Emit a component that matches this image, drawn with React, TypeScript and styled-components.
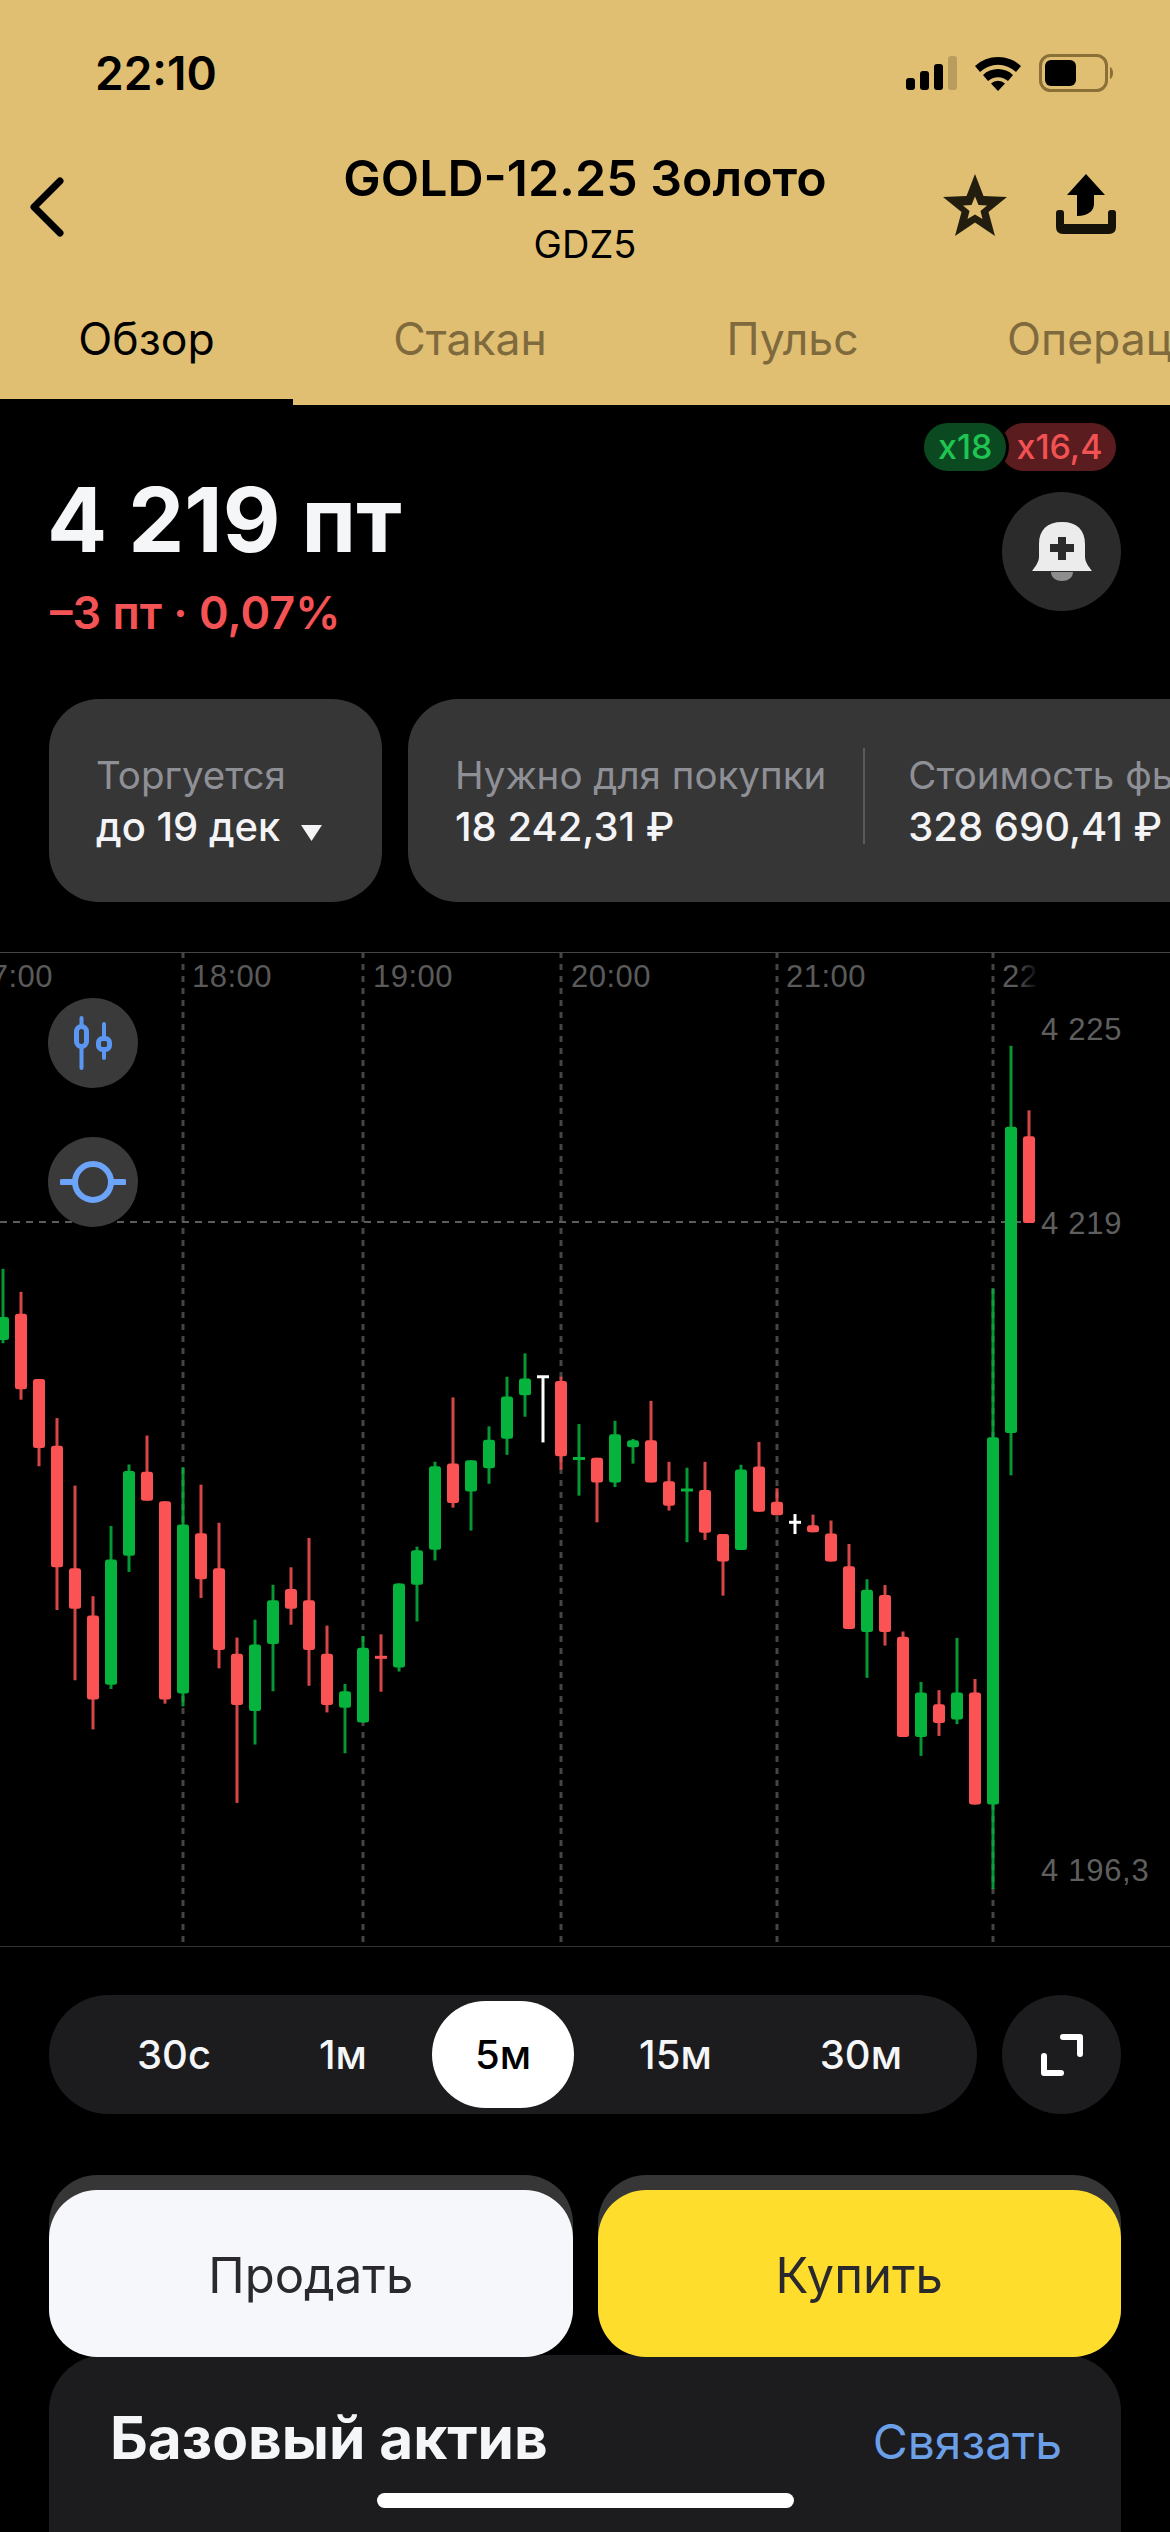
import React from 'react';
import styled, { createGlobalStyle } from 'styled-components';

const GlobalStyle = createGlobalStyle`
    html, body {
        margin: 0;
        padding: 0;
        background: #000;
    }
    * {
        box-sizing: border-box;
    }
`;

// y values below were read off the chart at two different scales
const left = (y: number) => 248 + y / 2.178;
const right = (y: number) => 48 + y / 1.704;

const GREEN = '#06b33c';
const RED = '#fb5254';
const WHITE = '#ffffff';

// color, wick top, body top, body bottom, wick bottom
type Candle = [string, number, number, number, number];

const leftCandles: Candle[] = [
    [GREEN, 150, 255, 305, 312],
    [RED, 200, 248, 412, 435],
    [RED, 390, 390, 540, 580],
    [RED, 475, 535, 800, 893],
    [RED, 622, 802, 890, 1046],
    [RED, 863, 905, 1088, 1153],
    [GREEN, 710, 783, 1056, 1065],
    [GREEN, 576, 590, 775, 810],
    [RED, 513, 592, 655, 655],
    [RED, 656, 656, 1088, 1097],
    [GREEN, 582, 707, 1075, 1103],
    [RED, 620, 726, 826, 867],
    [RED, 703, 802, 980, 1020],
    [RED, 953, 988, 1100, 1313],
    [GREEN, 914, 968, 1113, 1186],
    [GREEN, 838, 872, 967, 1070],
    [RED, 800, 847, 890, 925],
    [RED, 736, 872, 980, 1058],
    [RED, 927, 988, 1100, 1116],
    [GREEN, 1054, 1070, 1106, 1205],
    [GREEN, 950, 975, 1138, 1138],
    [RED, 946, 996, 996, 1071],
    [GREEN, 835, 835, 1018, 1027],
    [GREEN, 755, 763, 838, 918],
    [GREEN, 570, 580, 762, 785],
    [RED, 430, 574, 660, 670],
    [GREEN, 567, 567, 635, 720],
    [GREEN, 493, 522, 584, 618],
    [GREEN, 385, 428, 520, 555],
    [GREEN, 334, 389, 425, 472],
    [WHITE, 385, 385, 385, 528],
    [RED, 385, 394, 558, 587],
    [GREEN, 488, 563, 563, 644],
];

const rightCandles: Candle[] = [
    [RED, 780, 780, 822, 890],
    [GREEN, 717, 740, 822, 830],
    [GREEN, 748, 750, 762, 790],
    [RED, 683, 750, 822, 822],
    [RED, 787, 820, 862, 870],
    [GREEN, 797, 835, 835, 924],
    [RED, 787, 835, 908, 920],
    [RED, 910, 910, 957, 1015],
    [GREEN, 792, 800, 937, 937],
    [RED, 753, 795, 872, 872],
    [RED, 832, 855, 878, 878],
    [WHITE, 876, 890, 890, 910],
    [RED, 877, 895, 907, 907],
    [RED, 887, 909, 957, 957],
    [RED, 927, 965, 1072, 1072],
    [GREEN, 987, 1005, 1077, 1155],
    [RED, 997, 1014, 1077, 1100],
    [RED, 1076, 1085, 1256, 1256],
    [GREEN, 1162, 1180, 1256, 1288],
    [RED, 1176, 1200, 1232, 1254],
    [GREEN, 1087, 1180, 1226, 1234],
    [RED, 1157, 1180, 1371, 1371],
    [GREEN, 492, 745, 1371, 1515],
    [GREEN, 78, 216, 738, 810],
    [RED, 188, 232, 380, 380],
];

const candles: Candle[] = [
    ...leftCandles.map(([c, a, b, d, e]): Candle => [c, left(a), left(b), left(d), left(e)]),
    ...rightCandles.map(([c, a, b, d, e]): Candle => [c, right(a), right(b), right(d), right(e)]),
];

const gridLines = [183, 363, 561, 777, 993];
const timeLabels = [
    { x: -27, text: '17:00' },
    { x: 192, text: '18:00' },
    { x: 373, text: '19:00' },
    { x: 571, text: '20:00' },
    { x: 786, text: '21:00' },
    { x: 1002, text: '22:00' },
];
const priceLabels = [
    { y: 88, text: '4 225' },
    { y: 282, text: '4 219' },
    { y: 929, text: '4 196,3' },
];
const tabs = ['Обзор', 'Стакан', 'Пульс', 'Операции'];
const tabWidths = [293, 354, 291, 356];
const periods = ['30с', '1м', '5м', '15м', '30м'];

const Screen = styled.div`
    position: relative;
    width: 1170px;
    height: 2532px;
    overflow: hidden;
    background: #000;
    font-family: Inter, 'Noto Sans', sans-serif;
    color: #f5f6f8;
`;

const Header = styled.header`
    height: 405px;
    background: #e0bf73;
    color: #000;
`;

const StatusBar = styled.div`
    display: flex;
    justify-content: space-between;
    align-items: center;
    height: 148px;
    padding: 0 55px 2px 95px;
`;

const Clock = styled.span`
    font-size: 46px;
    font-weight: 600;
`;

const StatusIcons = styled.div`
    display: flex;
    align-items: center;
    gap: 17px;
`;

const NavRow = styled.div`
    position: relative;
    display: flex;
    justify-content: space-between;
    align-items: flex-start;
    height: 138px;
    padding: 0 54px 0 30px;
`;

const BackIcon = styled.svg`
    width: 34px;
    height: 60px;
    margin-top: 29px;
`;

const TitleBlock = styled.div`
    position: absolute;
    left: 0;
    right: 0;
    top: 2px;
    text-align: center;
`;

const Title = styled.div`
    font-size: 50px;
    font-weight: 600;
    line-height: 56px;
`;

const Ticker = styled.div`
    margin-top: 17px;
    font-size: 38px;
    line-height: 42px;
`;

const NavActions = styled.div`
    display: flex;
    gap: 49px;
    margin-top: 26px;
`;

const Tabs = styled.nav`
    display: flex;
    height: 119px;
`;

const Tab = styled.div<{ $active?: boolean; $width: number }>`
    flex: none;
    width: ${(p) => p.$width}px;
    padding-top: 27px;
    text-align: center;
    white-space: nowrap;
    font-size: 44.5px;
    line-height: 52px;
    color: ${(p) => (p.$active ? '#000' : '#7f6a3d')};
    border-bottom: ${(p) => (p.$active ? '6px solid #000' : 'none')};
`;

const Summary = styled.section`
    position: relative;
    height: 294px;
    padding: 65px 50px 0;
`;

const Price = styled.div`
    margin-left: -3px;
    font-size: 89px;
    font-weight: 700;
    line-height: 100px;
    white-space: nowrap;
`;

const Change = styled.div`
    margin-top: 16px;
    font-size: 45px;
    font-weight: 600;
    line-height: 54px;
    color: #f45355;
`;

const Badges = styled.div`
    position: absolute;
    top: 18px;
    left: 924px;
    display: flex;
`;

const GreenBadge = styled.span`
    position: relative;
    z-index: 1;
    height: 48px;
    padding: 0 14px;
    border-radius: 24px;
    background: #0b4a20;
    box-shadow: 0 0 0 3px #000;
    color: #1fc452;
    font-size: 34px;
    font-weight: 500;
    line-height: 48px;
`;

const RedBadge = styled.span`
    height: 48px;
    margin-left: -6px;
    padding: 0 14px 0 16px;
    border-radius: 24px;
    background: #5a1c1e;
    color: #f25254;
    font-size: 34px;
    font-weight: 500;
    line-height: 48px;
`;

const RoundButton = styled.div<{ $size: number; $bg: string }>`
    display: flex;
    align-items: center;
    justify-content: center;
    width: ${(p) => p.$size}px;
    height: ${(p) => p.$size}px;
    flex: none;
    border-radius: 50%;
    background: ${(p) => p.$bg};
`;

const BellSlot = styled.div`
    position: absolute;
    top: 87px;
    right: 49px;
`;

const Cards = styled.div`
    display: flex;
    gap: 26px;
    height: 203px;
    padding-left: 49px;
`;

const Card = styled.div<{ $width: number }>`
    display: flex;
    align-items: center;
    flex: none;
    width: ${(p) => p.$width}px;
    padding: 0 47px;
    border-radius: 50px;
    background: #363636;
`;

const Metric = styled.div`
    flex: none;
    white-space: nowrap;
`;

const MetricLabel = styled.div`
    font-size: 38.5px;
    line-height: 46px;
    color: #8f9096;
`;

const MetricValue = styled.div`
    margin-top: 6px;
    font-size: 40px;
    font-weight: 500;
    line-height: 46px;
    color: #f4f4f6;
`;

const Divider = styled.div`
    flex: none;
    width: 2px;
    height: 96px;
    margin: -10px 43px 0 37px;
    background: #5a5a5c;
`;

const Caret = styled.svg`
    margin-left: 21px;
`;

const Chart = styled.section`
    position: relative;
    height: 996px;
    margin-top: 50px;
`;

const ChartCanvas = styled.svg`
    display: block;
`;

const ChartTools = styled.div`
    position: absolute;
    top: 46px;
    left: 48px;
    display: flex;
    flex-direction: column;
    gap: 49px;
`;

const PeriodRow = styled.div`
    display: flex;
    gap: 25px;
    margin-top: 47px;
    padding: 0 49px;
`;

const PeriodBar = styled.div`
    display: flex;
    align-items: center;
    gap: 22px;
    width: 928px;
    height: 119px;
    padding-left: 45px;
    border-radius: 60px;
    background: #1c1c1e;
`;

const Period = styled.div<{ $active?: boolean }>`
    display: flex;
    align-items: center;
    height: 107px;
    padding: 0 43px;
    border-radius: 54px;
    font-size: 40px;
    font-weight: 500;
    background: ${(p) => (p.$active ? '#fff' : 'transparent')};
    color: ${(p) => (p.$active ? '#000' : '#f5f6f8')};
`;

const TradeRow = styled.div`
    position: relative;
    z-index: 1;
    display: flex;
    gap: 25px;
    margin-top: 61px;
    padding: 0 49px;
`;

const TradeBack = styled.div`
    flex: 1;
    padding-top: 15px;
    border-radius: 48px;
    background: #363636;
`;

const TradeButton = styled.div<{ $bg: string }>`
    display: flex;
    align-items: center;
    justify-content: center;
    height: 167px;
    padding-top: 3px;
    border-radius: 48px;
    background: ${(p) => p.$bg};
    color: #2a2a2e;
    font-size: 49px;
`;

const AssetCard = styled.section`
    display: flex;
    justify-content: space-between;
    align-items: baseline;
    height: 200px;
    margin: -2px 49px 0;
    padding: 47px 59px 0 61px;
    border-radius: 56px 56px 0 0;
    background: #1c1c1e;
`;

const AssetTitle = styled.h2`
    margin: 0;
    font-size: 58.5px;
    font-weight: 700;
`;

const AssetLink = styled.span`
    font-size: 48px;
    color: #6b9fe8;
`;

const HomeBar = styled.div`
    position: absolute;
    z-index: 2;
    left: 377px;
    bottom: 24px;
    width: 417px;
    height: 15px;
    border-radius: 8px;
    background: #fff;
`;

const StatusGlyphs = () => (
    <>
        <svg width="51" height="35" viewBox="0 0 51 35">
            <rect x="0" y="22" width="9" height="12" rx="3" fill="#000" />
            <rect x="14" y="15" width="9" height="19" rx="3" fill="#000" />
            <rect x="28" y="8" width="9" height="26" rx="3" fill="#000" />
            <rect x="42" y="0" width="9" height="34" rx="3" fill="#b99d5f" />
        </svg>
        <svg width="48" height="36" viewBox="0 0 48 36">
            <path d="M1 11 A34 34 0 0 1 47 11 L42 17 A26 26 0 0 0 6 17 Z" fill="#000" />
            <path d="M9 20 A22 22 0 0 1 39 20 L34 26 A15 15 0 0 0 14 26 Z" fill="#000" />
            <path d="M17 28.500 A10 10 0 0 1 31 28.500 L24 36 Z" fill="#000" />
        </svg>
        <svg width="76" height="38" viewBox="0 0 76 38">
            <rect x="1.500" y="1.500" width="66" height="35" rx="10" fill="none" stroke="#8a6f37" strokeWidth="3" />
            <rect x="6" y="6" width="31" height="26" rx="6" fill="#000" />
            <path d="M71 13 C75 14 75 24 71 25 Z" fill="#8a6f37" />
        </svg>
    </>
);

const StarIcon = () => (
    <svg width="64" height="62" viewBox="0 0 64 62">
        <path
            fillRule="evenodd"
            d="M32 0 L40.500 22 L64 23 L45.500 38 L52 62 L32 48.500 L12 62 L18.500 38 L0 23 L23.500 22 Z M32 22.500 L28.500 31 L20 31.500 L26.500 37 L24.500 45 L32 40.500 L39.500 45 L37.500 37 L44 31.500 L35.500 31 Z"
            fill="#231d10"
        />
    </svg>
);

const ShareIcon = () => (
    <svg width="60" height="60" viewBox="0 0 60 60">
        <path d="M30 0 L49 21 L38 21 L38 30 C38 36 33 42 21 42 L21 21 L11 21 Z" fill="#000" />
        <path
            d="M0 39 Q0 36 3 36 L5 36 Q8 36 8 39 L8 50 L52 50 L52 39 Q52 36 55 36 L57 36 Q60 36 60 39 L60 53 Q60 60 53 60 L7 60 Q0 60 0 53 Z"
            fill="#15120a"
        />
    </svg>
);

const BellIcon = () => (
    <svg width="60" height="60" viewBox="0 0 60 60">
        <path d="M19 50 L41 50 C41 62 19 62 19 50 Z" fill="#8e8e8e" />
        <path
            d="M30 0 C45 0 53 8 53 22 L53 35 C53 40 57 45 60 49 L0 49 C3 45 7 40 7 35 L7 22 C7 8 15 0 30 0 Z"
            fill="#ececec"
        />
        <rect x="26" y="15" width="8" height="23" fill="#2b2b2b" />
        <rect x="18" y="22" width="24" height="8" fill="#2b2b2b" />
    </svg>
);

const CandleToolIcon = () => (
    <svg width="38" height="54" viewBox="0 0 38 54" fill="none" stroke="#5b97f2" strokeWidth="4" strokeLinecap="round">
        <path d="M7.500 2 L7.500 8 M7.500 33 L7.500 52" />
        <rect x="2.500" y="10.500" width="10" height="20" rx="5" strokeWidth="5" />
        <path d="M30 8 L30 20 M30 36 L30 42" />
        <rect x="24.500" y="22.500" width="11" height="11" rx="4" strokeWidth="5" />
    </svg>
);

const LineToolIcon = () => (
    <svg width="66" height="42" viewBox="0 0 66 42" fill="none" stroke="#6ba4f8" strokeWidth="6" strokeLinecap="round">
        <circle cx="33" cy="21" r="18" />
        <path d="M2 21 L14 21 M52 21 L64 21" />
    </svg>
);

const ExpandIcon = () => (
    <svg width="42" height="42" viewBox="0 0 42 42" fill="none" stroke="#fff" strokeWidth="6" strokeLinecap="round" strokeLinejoin="round">
        <path d="M22 3 L39 3 L39 20" />
        <path d="M3 22 L3 39 L20 39" />
    </svg>
);

const PriceChart = () => (
    <ChartCanvas width="1170" height="996" viewBox="0 0 1170 996">
        <defs>
            <clipPath id="time-clip">
                <rect x="0" y="0" width="1040" height="60" />
            </clipPath>
            <linearGradient id="time-fade">
                <stop offset="0" stopColor="#000" stopOpacity="0" />
                <stop offset="1" stopColor="#000" stopOpacity="1" />
            </linearGradient>
        </defs>
        <rect x="0" y="0" width="1170" height="1" fill="#444" />
        <rect x="0" y="994" width="1170" height="1" fill="#333" />
        {gridLines.map((x) => (
            <line key={x} x1={x} y1="0" x2={x} y2="994" stroke="#454545" strokeWidth="3" strokeDasharray="6 6" />
        ))}
        <line x1="0" y1="270" x2="1037" y2="270" stroke="#5c5c5c" strokeWidth="2" strokeDasharray="7 6" />
        {candles.map(([color, wickTop, bodyTop, bodyBottom, wickBottom], i) => {
            const x = 3 + i * 18;
            const doji = bodyBottom - bodyTop < 2;
            return (
                <g key={i} fill={color}>
                    <rect x={x - 1.500} y={wickTop} width="3" height={wickBottom - wickTop} opacity={color === WHITE ? 1 : 0.85} />
                    {doji ? (
                        <rect x={x - 6} y={bodyTop - 1.500} width="12" height="3" />
                    ) : (
                        <rect x={x - 6} y={bodyTop} width="12" height={bodyBottom - bodyTop} rx="2.500" />
                    )}
                </g>
            );
        })}
        <g clipPath="url(#time-clip)" fontFamily="'Liberation Sans', sans-serif" fontSize="31" fill="#5a5a5a">
            {timeLabels.map((label) => (
                <text key={label.x} x={label.x} y="35" letterSpacing="0.5">
                    {label.text}
                </text>
            ))}
        </g>
        <rect x="1016" y="6" width="24" height="40" fill="url(#time-fade)" />
        <g fontFamily="'Liberation Sans', sans-serif" fontSize="31" fill="#5f5f5f">
            {priceLabels.map((label) => (
                <text key={label.y} x="1041" y={label.y} letterSpacing="0.7">
                    {label.text}
                </text>
            ))}
        </g>
    </ChartCanvas>
);

const App = () => {
    return (
        <Screen>
            <GlobalStyle />
            <Header>
                <StatusBar>
                    <Clock>22:10</Clock>
                    <StatusIcons>
                        <StatusGlyphs />
                    </StatusIcons>
                </StatusBar>
                <NavRow>
                    <TitleBlock>
                        <Title>GOLD-12.25 Золото</Title>
                        <Ticker>GDZ5</Ticker>
                    </TitleBlock>
                    <BackIcon viewBox="0 0 34 60" fill="none" stroke="#000" strokeWidth="7" strokeLinecap="round" strokeLinejoin="round">
                        <path d="M30 4 L4 30 L30 56" />
                    </BackIcon>
                    <NavActions>
                        <StarIcon />
                        <ShareIcon />
                    </NavActions>
                </NavRow>
                <Tabs>
                    {tabs.map((tab, i) => (
                        <Tab key={tab} $active={i === 0} $width={tabWidths[i]}>
                            {tab}
                        </Tab>
                    ))}
                </Tabs>
            </Header>

            <Summary>
                <Price>4 219 пт</Price>
                <Change>–3 пт · 0,07%</Change>
                <Badges>
                    <GreenBadge>x18</GreenBadge>
                    <RedBadge>x16,4</RedBadge>
                </Badges>
                <BellSlot>
                    <RoundButton $size={119} $bg="#2b2b2b">
                        <BellIcon />
                    </RoundButton>
                </BellSlot>
            </Summary>

            <Cards>
                <Card $width={333}>
                    <Metric>
                        <MetricLabel>Торгуется</MetricLabel>
                        <MetricValue>
                            до 19 дек
                            <Caret width="21" height="16" viewBox="0 0 21 16">
                                <path d="M0 0 L21 0 L10.500 16 Z" fill="#f4f4f6" />
                            </Caret>
                        </MetricValue>
                    </Metric>
                </Card>
                <Card $width={900}>
                    <Metric>
                        <MetricLabel>Нужно для покупки</MetricLabel>
                        <MetricValue>18 242,31 ₽</MetricValue>
                    </Metric>
                    <Divider />
                    <Metric>
                        <MetricLabel>Стоимость фьючерса</MetricLabel>
                        <MetricValue>328 690,41 ₽</MetricValue>
                    </Metric>
                </Card>
            </Cards>

            <Chart>
                <PriceChart />
                <ChartTools>
                    <RoundButton $size={90} $bg="#3a3a3a">
                        <CandleToolIcon />
                    </RoundButton>
                    <RoundButton $size={90} $bg="#3a3a3a">
                        <LineToolIcon />
                    </RoundButton>
                </ChartTools>
            </Chart>

            <PeriodRow>
                <PeriodBar>
                    {periods.map((period) => (
                        <Period key={period} $active={period === '5м'}>
                            {period}
                        </Period>
                    ))}
                </PeriodBar>
                <RoundButton $size={119} $bg="#1c1c1e">
                    <ExpandIcon />
                </RoundButton>
            </PeriodRow>

            <TradeRow>
                <TradeBack>
                    <TradeButton $bg="#f5f7fa">Продать</TradeButton>
                </TradeBack>
                <TradeBack>
                    <TradeButton $bg="#ffdd2d">Купить</TradeButton>
                </TradeBack>
            </TradeRow>

            <AssetCard>
                <AssetTitle>Базовый актив</AssetTitle>
                <AssetLink>Связать</AssetLink>
            </AssetCard>

            <HomeBar />
        </Screen>
    );
};

export default App;
